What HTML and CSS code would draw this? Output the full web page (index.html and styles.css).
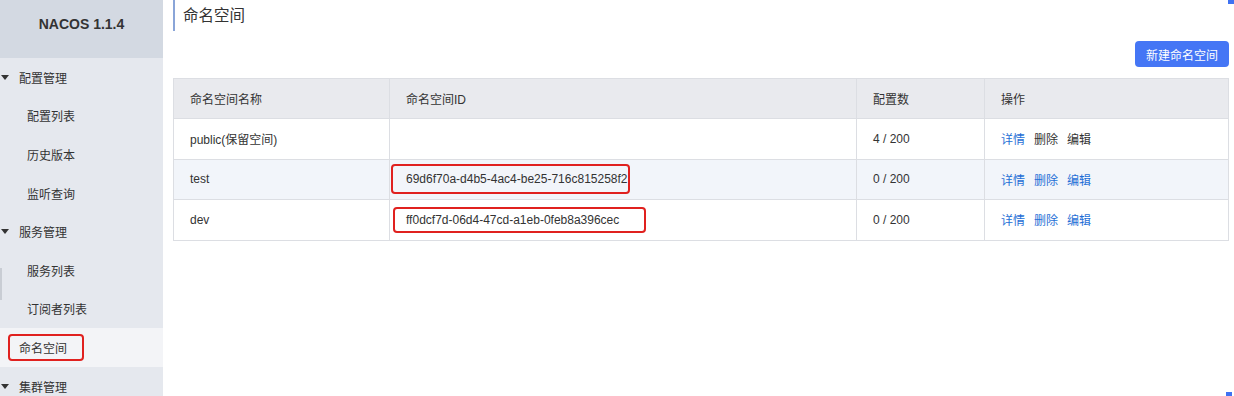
FILE: index.html
```html
<!DOCTYPE html>
<html lang="zh-CN">
<head>
    <meta charset="UTF-8">
    <meta name="viewport" content="width=device-width, initial-scale=1.0">
    <title>命名空间 - NACOS</title>
    <link rel="stylesheet" href="styles.css">
</head>
<body>
    <div id="sidebar">
        <div class="brand">NACOS 1.1.4</div>
        <ul class="menu">
            <li class="group"><span class="caret"></span>配置管理</li>
            <li class="item">配置列表</li>
            <li class="item">历史版本</li>
            <li class="item">监听查询</li>
            <li class="group"><span class="caret"></span>服务管理</li>
            <li class="item">服务列表</li>
            <li class="item">订阅者列表</li>
            <li class="item active"><span class="mark">命名空间</span></li>
            <li class="group"><span class="caret"></span>集群管理</li>
        </ul>
        <span class="side-scroll"></span>
    </div>

    <div id="main">
        <h2 class="page-title">命名空间</h2>
        <div class="toolbar">
            <button class="btn-primary">新建命名空间</button>
        </div>
        <table id="namespaces">
            <thead>
                <tr>
                    <th class="c-name">命名空间名称</th>
                    <th class="c-id">命名空间ID</th>
                    <th class="c-count">配置数</th>
                    <th class="c-ops">操作</th>
                </tr>
            </thead>
            <tbody>
                <tr>
                    <td>public(保留空间)</td>
                    <td></td>
                    <td>4 / 200</td>
                    <td><a class="op">详情</a><a class="op off">删除</a><a class="op off">编辑</a></td>
                </tr>
                <tr class="hover">
                    <td>test</td>
                    <td><span class="mark-id first">69d6f70a-d4b5-4ac4-be25-716c815258f2</span></td>
                    <td>0 / 200</td>
                    <td><a class="op">详情</a><a class="op">删除</a><a class="op">编辑</a></td>
                </tr>
                <tr>
                    <td>dev</td>
                    <td><span class="mark-id second">ff0dcf7d-06d4-47cd-a1eb-0feb8a396cec</span></td>
                    <td>0 / 200</td>
                    <td><a class="op">详情</a><a class="op">删除</a><a class="op">编辑</a></td>
                </tr>
            </tbody>
        </table>
        <span class="edge edge-top"></span>
        <span class="edge edge-bottom"></span>
    </div>
</body>
</html>
```

FILE: styles.css
```css
body {
    font-family: "Liberation Sans", "Noto Sans CJK SC", sans-serif;
    font-size: 12px;
    color: #333;
    margin: 0;
    display: flex;
    height: 396px;
    overflow: hidden;
    background-color: #ffffff;
}
#sidebar {
    position: relative;
    width: 163px;
    flex-shrink: 0;
    background-color: #e5e8ee;
}
.brand {
    height: 58px;
    line-height: 48px;
    text-align: center;
    font-size: 14px;
    font-weight: bold;
    color: #333;
    background-color: #d3d9e2;
}
.menu {
    list-style: none;
    margin: 0;
    padding: 0;
}
.menu li {
    height: 38.6px;
    display: flex;
    align-items: center;
    color: #333;
}
.group {
    padding-left: 1px;
}
.caret {
    width: 0;
    height: 0;
    border-left: 4px solid transparent;
    border-right: 4px solid transparent;
    border-top: 5px solid #333;
    margin-right: 10px;
}
.item {
    padding-left: 27px;
    color: #555;
}
.menu li.active {
    padding-left: 8px;
    background-color: #f3f4f7;
}
.mark {
    border: 2px solid #e0211f;
    border-radius: 4px;
    padding: 3px 15px 3px 9px;
    color: #333;
}
.side-scroll {
    position: absolute;
    left: 0;
    top: 268px;
    width: 2px;
    height: 32px;
    background-color: #c9cdd4;
}
#main {
    position: relative;
    flex: 1;
    padding: 0 5px 0 10px;
}
.page-title {
    margin: 0;
    height: 31px;
    line-height: 31px;
    padding-left: 8px;
    border-left: 2px solid #8aa5d8;
    font-size: 15.5px;
    font-weight: normal;
    color: #333;
}
.toolbar {
    display: flex;
    justify-content: flex-end;
    margin-top: 10px;
    margin-bottom: 11px;
}
.btn-primary {
    height: 26px;
    padding: 0 11px;
    font-family: inherit;
    font-size: 12px;
    color: #fff;
    background-color: #4576f5;
    border: none;
    border-radius: 4px;
}
table {
    width: 1056px;
    border-collapse: collapse;
    table-layout: fixed;
}
th, td {
    height: 39.5px;
    padding: 0 0 0 16px;
    border: 1px solid #dcdee3;
    text-align: left;
    font-weight: normal;
    color: #333;
}
th {
    height: 39px;
    background-color: #e9eaee;
}
.c-name { width: 199px; }
.c-id { width: 450px; }
.c-count { width: 111px; }
tr.hover td {
    background-color: #f2f5fa;
}
.op {
    color: #1f6fd6;
    margin-right: 9px;
}
.op.off {
    color: #333;
}
.mark-id {
    display: inline-block;
    border: 2px solid #e0211f;
    border-radius: 4px;
}
.mark-id.first {
    margin-left: -15px;
    padding: 6px 0 6px 13px;
}
.mark-id.second {
    margin-left: -13px;
    padding: 4px 25px 4px 11px;
}
.edge {
    position: absolute;
    right: 0;
    width: 6px;
    height: 4px;
    background-color: #3f72f2;
}
.edge-top {
    top: 0;
}
.edge-bottom {
    top: 392px;
    right: 2px;
}
```
